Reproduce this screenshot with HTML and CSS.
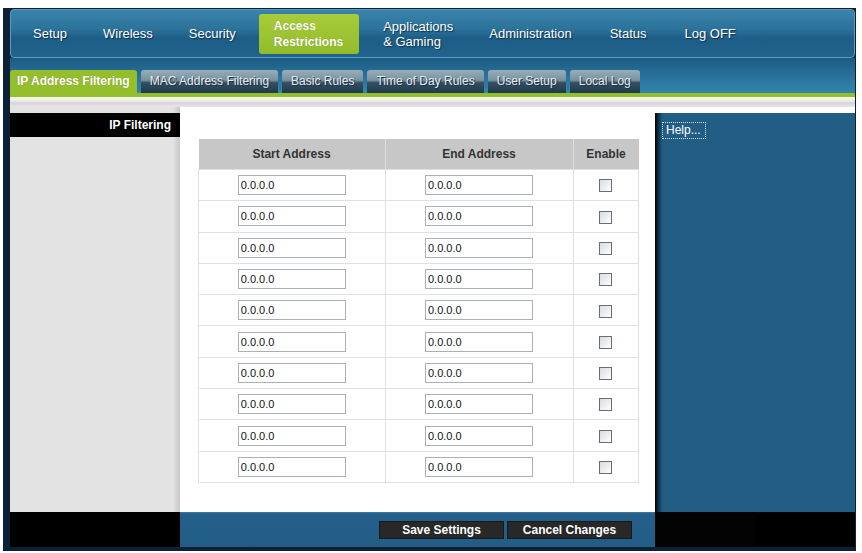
FILE: index.html
```html
<!DOCTYPE html>
<html>
<head>
<meta charset="utf-8">
<title>Access Restrictions - IP Address Filtering</title>
<link rel="stylesheet" href="styles.css">
</head>
<body>
<div class="frame">
  <div class="nav">
    <div class="nav-item">Setup</div>
    <div class="nav-item">Wireless</div>
    <div class="nav-item">Security</div>
    <div class="nav-item nav-active">Access<br>Restrictions</div>
    <div class="nav-item">Applications<br>&amp; Gaming</div>
    <div class="nav-item">Administration</div>
    <div class="nav-item nav-wide">Status</div>
    <div class="nav-item nav-wide">Log OFF</div>
  </div>
  <div class="tabbar">
    <div class="tab tab-active">IP Address Filtering</div>
    <div class="tab">MAC Address Filtering</div>
    <div class="tab">Basic Rules</div>
    <div class="tab">Time of Day Rules</div>
    <div class="tab">User Setup</div>
    <div class="tab">Local Log</div>
  </div>
  <div class="greenline"></div>
  <div class="strip"></div>
  <div class="content">
    <div class="side-left">
      <div class="side-title">IP Filtering</div>
    </div>
    <div class="main">
      <table class="filter">
        <thead>
          <tr><th class="c1">Start Address</th><th class="c2">End Address</th><th class="c3">Enable</th></tr>
        </thead>
        <tbody>
          <tr><td><input class="addr" type="text" value="0.0.0.0"></td><td><input class="addr" type="text" value="0.0.0.0"></td><td><input class="chk" type="checkbox"></td></tr>
          <tr><td><input class="addr" type="text" value="0.0.0.0"></td><td><input class="addr" type="text" value="0.0.0.0"></td><td><input class="chk" type="checkbox"></td></tr>
          <tr><td><input class="addr" type="text" value="0.0.0.0"></td><td><input class="addr" type="text" value="0.0.0.0"></td><td><input class="chk" type="checkbox"></td></tr>
          <tr><td><input class="addr" type="text" value="0.0.0.0"></td><td><input class="addr" type="text" value="0.0.0.0"></td><td><input class="chk" type="checkbox"></td></tr>
          <tr><td><input class="addr" type="text" value="0.0.0.0"></td><td><input class="addr" type="text" value="0.0.0.0"></td><td><input class="chk" type="checkbox"></td></tr>
          <tr><td><input class="addr" type="text" value="0.0.0.0"></td><td><input class="addr" type="text" value="0.0.0.0"></td><td><input class="chk" type="checkbox"></td></tr>
          <tr><td><input class="addr" type="text" value="0.0.0.0"></td><td><input class="addr" type="text" value="0.0.0.0"></td><td><input class="chk" type="checkbox"></td></tr>
          <tr><td><input class="addr" type="text" value="0.0.0.0"></td><td><input class="addr" type="text" value="0.0.0.0"></td><td><input class="chk" type="checkbox"></td></tr>
          <tr><td><input class="addr" type="text" value="0.0.0.0"></td><td><input class="addr" type="text" value="0.0.0.0"></td><td><input class="chk" type="checkbox"></td></tr>
          <tr><td><input class="addr" type="text" value="0.0.0.0"></td><td><input class="addr" type="text" value="0.0.0.0"></td><td><input class="chk" type="checkbox"></td></tr>
        </tbody>
      </table>
    </div>
    <div class="side-right">
      <div class="help-panel">
        <div class="help">Help...</div>
      </div>
    </div>
  </div>
  <div class="footer">
    <div class="f-left"></div>
    <div class="f-mid">
      <button class="btn" type="button">Save Settings</button>
      <button class="btn" type="button">Cancel Changes</button>
    </div>
    <div class="f-right"><div class="f-right-inner"></div></div>
  </div>
</div>
</body>
</html>
```
FILE: styles.css
```css
html, body {
  margin: 0;
  padding: 0;
  background: #ffffff;
}

body {
  font-family: "Liberation Sans", Arial, sans-serif;
  font-size: 12px;
}

.frame {
  box-sizing: border-box;
  width: 853px;
  height: 543px;
  margin: 8px 0 0 3px;
  padding: 1px 1px 4px 7px;
  background: #0c2136;
  display: flex;
  flex-direction: column;
}

/* ---------- top navigation ---------- */
.nav {
  box-sizing: border-box;
  height: 49px;
  border: 1px solid #5c9cc1;
  border-radius: 4px;
  background: linear-gradient(#3a84ab 0%, #2c729b 40%, #1d5d86 60%, #21648e 100%);
  display: flex;
  align-items: center;
  padding-left: 4px;
}

.nav-item {
  padding: 0 18px;
  color: #ffffff;
  font-size: 13px;
  line-height: 15px;
  text-shadow: 1px 1px 1px #0b2f48;
  white-space: nowrap;
}

.nav-wide {
  padding: 0 18px 0 20px;
}

.nav-active {
  box-sizing: border-box;
  height: 40px;
  margin: 0 6px 0 5px;
  padding: 4px 16px 0 15px;
  border-radius: 3px;
  background: linear-gradient(#a8cc3a, #92bb2b);
  font-size: 12px;
  font-weight: bold;
  line-height: 16px;
  text-shadow: 0 0 1px #6f8f1a;
}

/* ---------- sub tabs ---------- */
.tabbar {
  height: 35px;
  display: flex;
  align-items: flex-end;
  gap: 4px;
  background: linear-gradient(#1b5b82 0%, #2a75a0 60%, #3484ab 100%);
}

.tab {
  box-sizing: border-box;
  height: 23px;
  padding: 0 9px;
  border-radius: 3px 3px 0 0;
  background: linear-gradient(#9aadb7 0%, #7791a0 45%, #344f60 55%, #1f3a4c 100%);
  color: #e6ebee;
  font-size: 12px;
  line-height: 23px;
  text-shadow: 1px 1px 0 #1b3344;
  white-space: nowrap;
}

.tab-active {
  padding: 0 7px;
  background: #95be2c;
  color: #ffffff;
  font-weight: bold;
  text-shadow: 0 0 1px #6e8e1a;
}

.greenline {
  height: 4px;
  background: #95be2c;
}

.strip {
  height: 10px;
  background: linear-gradient(#f6f7e9 0%, #eeeee6 35%, #d6d6da 60%, #e8e8e8 100%);
}

/* ---------- content ---------- */
.content {
  height: 405px;
  display: flex;
}

.side-left {
  width: 170px;
  padding-top: 6px;
  background: linear-gradient(to right, #e3e3e3 0, #e3e3e3 163px, #c6c6c6 170px);
}

.side-title {
  height: 24px;
  line-height: 24px;
  padding-right: 9px;
  background: #000000;
  color: #ffffff;
  font-weight: bold;
  font-size: 12px;
  text-align: right;
}

.main {
  box-sizing: border-box;
  width: 475px;
  padding: 32px 0 0 18px;
  background: #ffffff;
}

.filter {
  width: 438px;
  border-collapse: collapse;
  table-layout: fixed;
  font-family: "Liberation Sans", Arial, sans-serif;
}

.filter th {
  height: 30px;
  padding: 0;
  background: #c7c7c7;
  border-left: 1px solid #dedede;
  color: #333333;
  font-size: 12px;
  font-weight: bold;
  text-align: center;
}

.filter th:first-child {
  border-left: none;
}

.filter .c1 { width: 186px; }
.filter .c2 { width: 187px; }
.filter .c3 { width: 65px; }

.filter td {
  height: 30.3px;
  padding: 0;
  border: 1px solid #e0e0e0;
  text-align: center;
  vertical-align: middle;
}

.addr {
  box-sizing: border-box;
  width: 108px;
  height: 20px;
  margin: 0;
  padding: 0 2px;
  border: 1px solid #a9b0b6;
  background: #ffffff;
  color: #111111;
  font-family: "Liberation Sans", Arial, sans-serif;
  font-size: 11px;
  vertical-align: middle;
}

.chk {
  -webkit-appearance: none;
  appearance: none;
  box-sizing: border-box;
  width: 13px;
  height: 13px;
  margin: 0;
  border: 1px solid #6a6e72;
  background: linear-gradient(135deg, #d9dde2 0%, #eef0f2 60%, #ffffff 100%);
  vertical-align: middle;
}

.side-right {
  width: 200px;
  padding-top: 6px;
  background: #ffffff;
  display: flex;
}

.help-panel {
  flex: 1;
  padding: 9px 0 0 7px;
  background: linear-gradient(to right, #000000 0, #0d2a3e 3px, #1f5980 7px, #225d86 9px);
}

.help {
  display: inline-block;
  padding: 1px 4px 1px 3px;
  border: 1px dotted #d8e4ec;
  color: #ffffff;
  font-size: 12px;
  line-height: 13px;
}

/* ---------- footer ---------- */
.footer {
  height: 35px;
  display: flex;
}

.f-left {
  width: 170px;
  background: #000000;
}

.f-mid {
  box-sizing: border-box;
  width: 475px;
  padding: 9px 23px 0 0;
  background: linear-gradient(#3d7ca5 0, #235f88 2px, #225d86 100%);
  display: flex;
  justify-content: flex-end;
  align-items: flex-start;
  gap: 3px;
}

.btn {
  box-sizing: border-box;
  width: 125px;
  height: 18px;
  margin: 0;
  padding: 0;
  border: 1px solid #1a1a1a;
  background: #282828;
  color: #ffffff;
  font-family: "Liberation Sans", Arial, sans-serif;
  font-size: 12px;
  font-weight: bold;
  line-height: 16px;
}

.f-right {
  width: 200px;
  background: #030303;
  display: flex;
  justify-content: flex-end;
}

.f-right-inner {
  width: 95px;
  margin: 2px 4px 2px 0;
  background: #000000;
}
```
